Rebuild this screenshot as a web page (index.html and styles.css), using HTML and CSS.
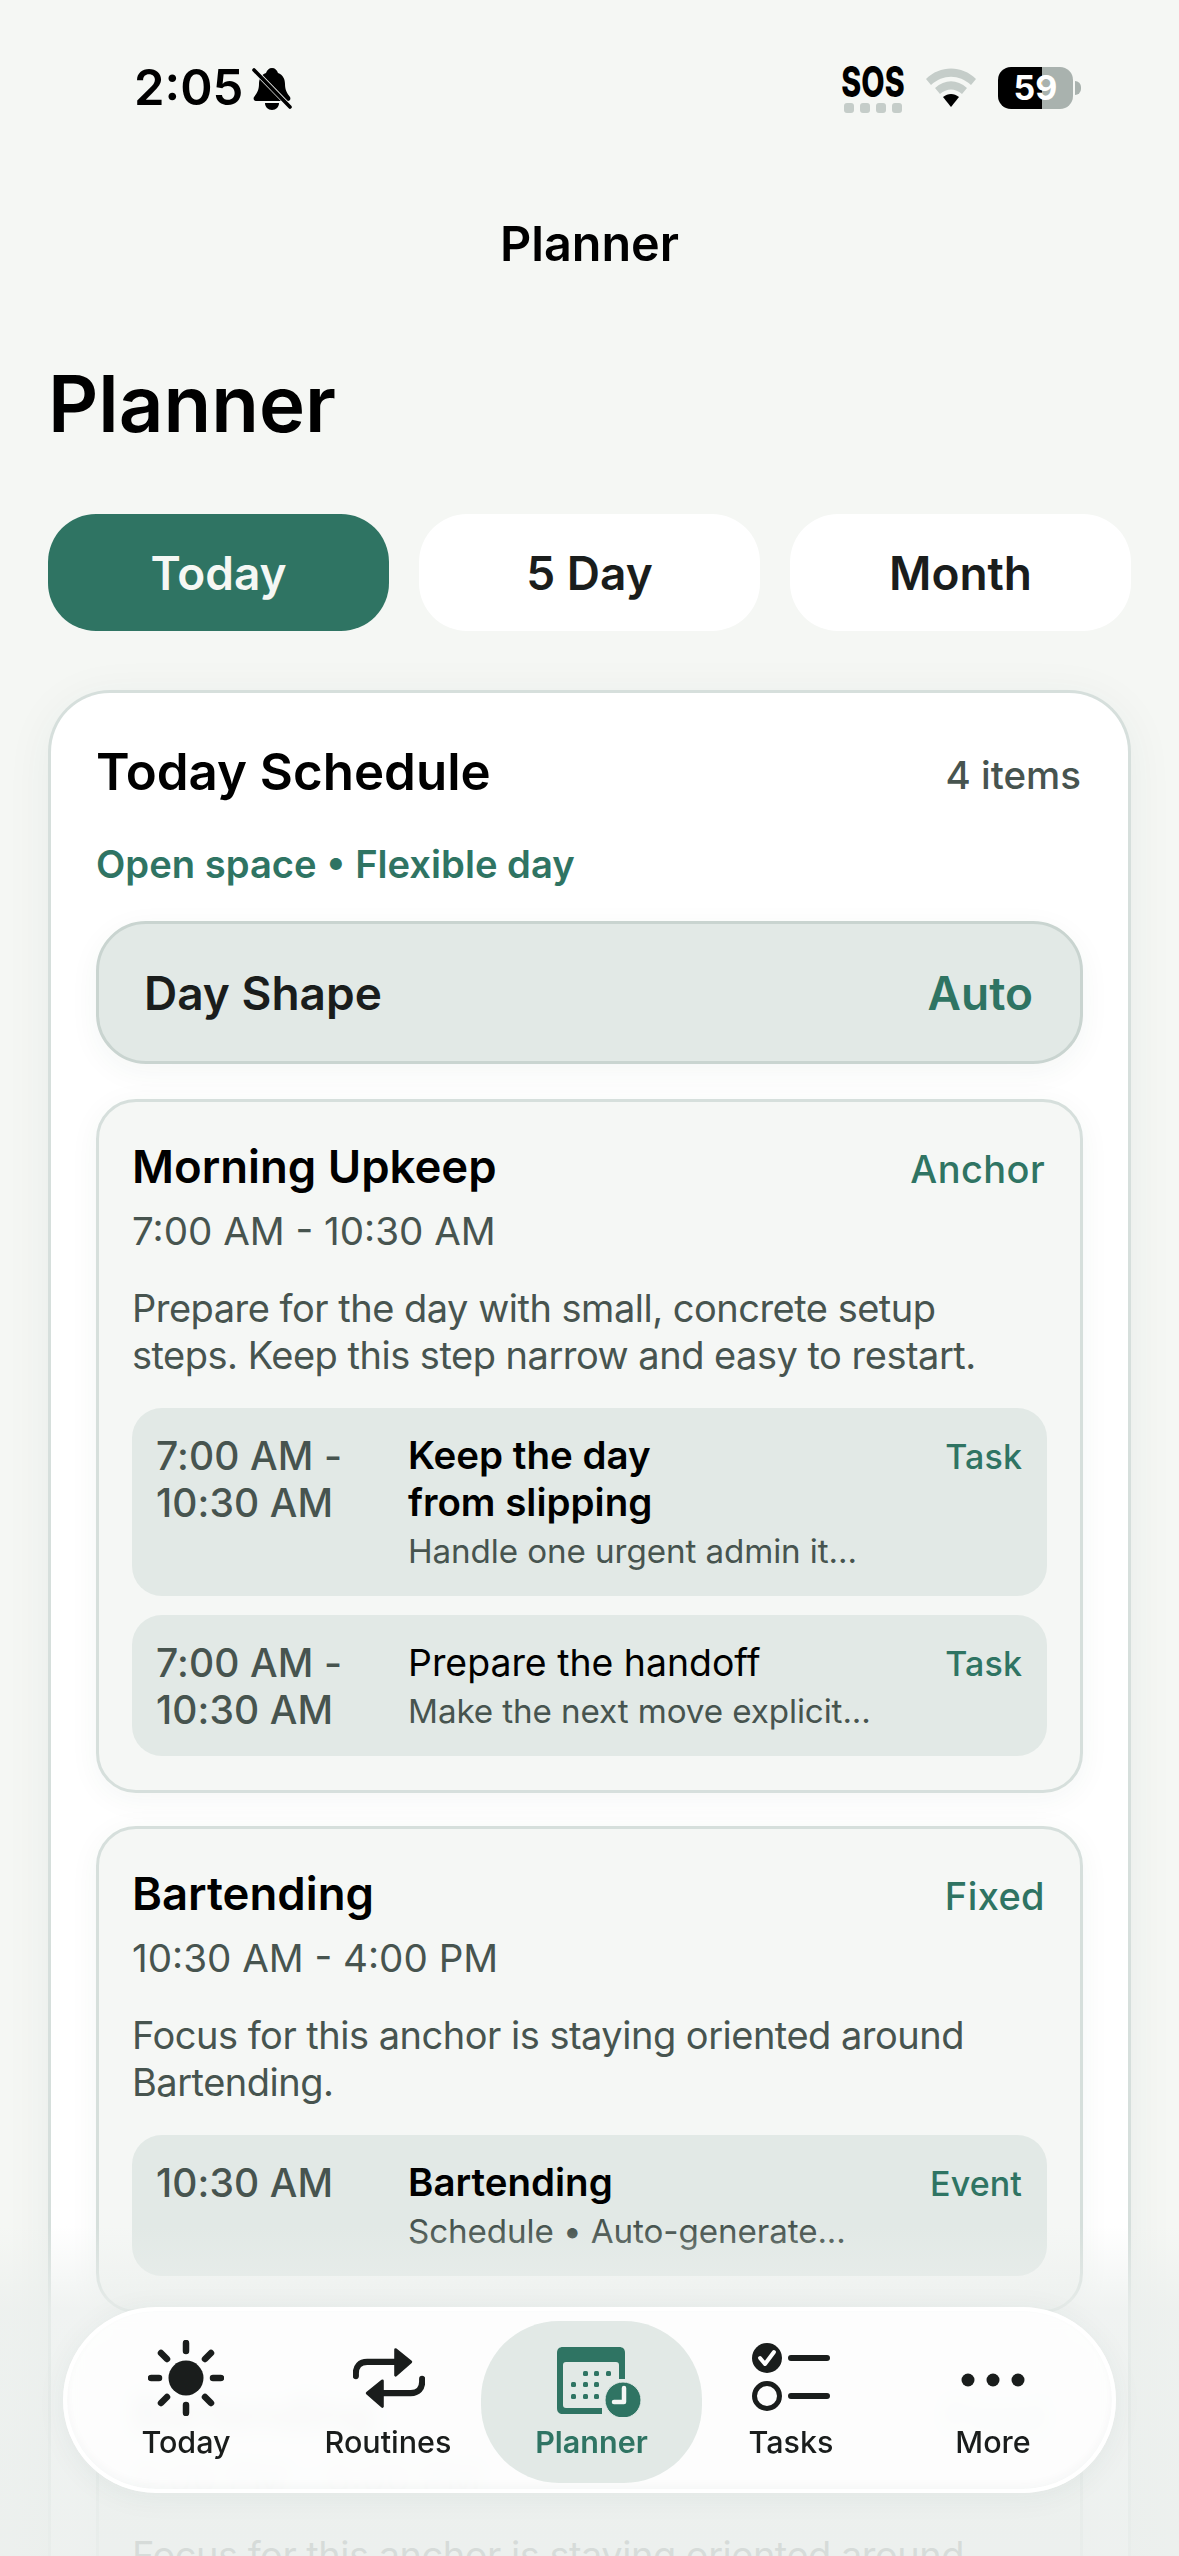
FILE: index.html
```html
<!DOCTYPE html>
<html lang="en">
<head>
<meta charset="utf-8">
<title>Planner</title>
<link rel="stylesheet" href="styles.css">
</head>
<body>
<div class="screen">
  <header class="status">
    <div class="status-left">
      <span class="clock">2:05</span>
      <svg class="bell" viewBox="0 0 40 43"><path d="M20 1c3 0 5 2 6 5 5 2 7 6 7 11 0 6 2 9 5 13 1 2 0 4-2 4H4c-2 0-3-2-2-4 3-4 5-7 5-13 0-5 2-9 7-11 1-3 3-5 6-5z" fill="#000"/><path d="M13 36h14c0 4-3 7-7 7s-7-3-7-7z" fill="#000"/><path d="M3 -1l39 40" stroke="#f5f7f4" stroke-width="5" transform="translate(-2.4 2.4)"/><path d="M2 3l36 37" stroke="#000" stroke-width="3.6" stroke-linecap="round"/></svg>
    </div>
    <div class="status-right">
      <div class="sos">
        <span class="sos-text">SOS</span>
        <span class="sos-dots"><i></i><i></i><i></i><i></i></span>
      </div>
      <svg class="wifi" viewBox="0 0 50 40"><path d="M0 11C14-3 36-3 50 11l-5 6C33 6 17 6 5 17z" fill="#c5cdc9"/><path d="M9 20c10-9 22-9 32 0l-5 6c-7-6-15-6-22 0z" fill="#c5cdc9"/><path d="M17 29c5-4 11-4 16 0l-8 10z" fill="#000"/></svg>
      <div class="battery"><span class="battery-num">59</span></div>
      <span class="battery-tip"></span>
    </div>
  </header>

  <div class="nav-title">Planner</div>
  <h1 class="page-title">Planner</h1>

  <div class="segments">
    <div class="segment segment-on">Today</div>
    <div class="segment">5 Day</div>
    <div class="segment">Month</div>
  </div>

  <section class="schedule">
    <div class="schedule-head">
      <h2>Today Schedule</h2>
      <span class="count">4 items</span>
    </div>
    <p class="mood">Open space • Flexible day</p>
    <div class="shape"><span>Day Shape</span><span class="shape-val">Auto</span></div>

    <article class="anchor">
      <div class="anchor-head"><h3>Morning Upkeep</h3><span class="tag">Anchor</span></div>
      <p class="anchor-time">7:00 AM - 10:30 AM</p>
      <p class="anchor-desc">Prepare for the day with small, concrete setup steps. Keep this step narrow and easy to restart.</p>
      <div class="item">
        <div class="item-time">7:00 AM - 10:30 AM</div>
        <div class="item-body"><div class="item-title strong">Keep the day<br>from slipping</div><div class="item-sub">Handle one urgent admin it...</div></div>
        <span class="item-tag">Task</span>
      </div>
      <div class="item">
        <div class="item-time">7:00 AM - 10:30 AM</div>
        <div class="item-body"><div class="item-title">Prepare the handoff</div><div class="item-sub">Make the next move explicit...</div></div>
        <span class="item-tag">Task</span>
      </div>
    </article>

    <article class="anchor">
      <div class="anchor-head"><h3>Bartending</h3><span class="tag">Fixed</span></div>
      <p class="anchor-time">10:30 AM - 4:00 PM</p>
      <p class="anchor-desc">Focus for this anchor is staying oriented around Bartending.</p>
      <div class="item">
        <div class="item-time">10:30 AM</div>
        <div class="item-body"><div class="item-title strong">Bartending</div><div class="item-sub">Schedule • Auto-generate...</div></div>
        <span class="item-tag">Event</span>
      </div>
    </article>

    <article class="anchor">
      <div class="anchor-head"><h3>Bartending</h3><span class="tag">Fixed</span></div>
      <p class="anchor-time">4:00 PM - 6:00 PM</p>
      <p class="anchor-desc">Focus for this anchor is staying oriented around Bartending.</p>
    </article>
  </section>

  <div class="fade"></div>

  <nav class="tabbar">
    <div class="tab">
      <svg class="ic ic-sun" viewBox="0 0 76 76" fill="none" stroke="#1a1d1c" stroke-width="6.5" stroke-linecap="round"><circle cx="38" cy="38" r="17.5" fill="#1a1d1c" stroke="none"/><path d="M38 3v8M38 65v8M3 38h8M65 38h8M13 13l6 6M57 57l6 6M13 63l6-6M57 19l6-6"/></svg>
      <span>Today</span>
    </div>
    <div class="tab">
      <svg class="ic ic-loop" viewBox="0 0 76 64" fill="none" stroke="#1a1d1c" stroke-width="6.5" stroke-linecap="round" stroke-linejoin="round"><path d="M3 30v-3c0-7 4-12 12-12h34"/><path d="M73 33v3c0 7-4 12-12 12H27"/><path d="M45 2l16 13-16 14z" fill="#1a1d1c" stroke-width="3"/><path d="M31 35L15 48l16 14z" fill="#1a1d1c" stroke-width="3"/></svg>
      <span>Routines</span>
    </div>
    <div class="tab tab-on">
      <svg class="ic ic-cal" viewBox="0 0 84 70"><path d="M6 0h56c4 0 6 2 6 6v26h-6V18c0-2-1-3-3-3H9c-2 0-3 1-3 3v40c0 2 1 3 3 3h36v6H6c-4 0-6-2-6-6V6c0-4 2-6 6-6z" fill="#2f7463"/><g fill="#2f7463"><rect x="26" y="24" width="5" height="5" rx="1.5"/><rect x="37" y="24" width="5" height="5" rx="1.5"/><rect x="49" y="24" width="5" height="5" rx="1.5"/><rect x="14" y="35" width="5" height="5" rx="1.5"/><rect x="26" y="35" width="5" height="5" rx="1.5"/><rect x="37" y="35" width="5" height="5" rx="1.5"/><rect x="14" y="47" width="5" height="5" rx="1.5"/><rect x="26" y="47" width="5" height="5" rx="1.5"/><rect x="37" y="47" width="5" height="5" rx="1.5"/></g><circle cx="66" cy="53" r="18" fill="#2f7463" stroke="#e2e9e6" stroke-width="1"/><path d="M67 41v14H57" fill="none" stroke="#f4f7f5" stroke-width="4.5" stroke-linecap="round" stroke-linejoin="round"/></svg>
      <span>Planner</span>
    </div>
    <div class="tab">
      <svg class="ic ic-tasks" viewBox="0 0 78 68" fill="none"><circle cx="15" cy="15" r="15" fill="#1a1d1c"/><path d="M8 15l5 6 9-12" stroke="#fff" stroke-width="4" stroke-linecap="round" stroke-linejoin="round"/><circle cx="15" cy="53" r="12.5" stroke="#1a1d1c" stroke-width="5"/><path d="M39 15h36M39 53h36" stroke="#1a1d1c" stroke-width="6" stroke-linecap="round"/></svg>
      <span>Tasks</span>
    </div>
    <div class="tab">
      <svg class="ic ic-more" viewBox="0 0 64 14" fill="#1a1d1c"><circle cx="7" cy="7" r="6.5"/><circle cx="32" cy="7" r="6.5"/><circle cx="57" cy="7" r="6.5"/></svg>
      <span>More</span>
    </div>
  </nav>
</div>
</body>
</html>
```
FILE: styles.css
```css
* { box-sizing: border-box; }
html, body { margin: 0; padding: 0; }
body {
  width: 1179px;
  height: 2556px;
  overflow: hidden;
  background: #f5f7f4;
  font-family: Inter, "Noto Sans", sans-serif;
  color: #000;
}
h1, h2, h3, p { margin: 0; font-weight: inherit; }

.screen { position: relative; width: 1179px; height: 2556px; overflow: hidden; }

/* status bar */
.status { height: 176px; padding: 64px 98px 0 134px; display: flex; justify-content: space-between; align-items: flex-start; }
.status-left { display: flex; align-items: center; gap: 9px; }
.clock { font-size: 49px; font-weight: 600; line-height: 48px; }
.bell { width: 40px; height: 43px; margin-top: 1px; }
.status-right { display: flex; align-items: flex-start; }
.sos { width: 62px; margin-right: 22px; display: flex; flex-direction: column; align-items: center; }
.sos-text { font-size: 42px; font-weight: 800; line-height: 36px; transform: scaleX(.72); white-space: nowrap; }
.sos-dots { display: flex; gap: 6px; margin-top: 3px; }
.sos-dots i { width: 10px; height: 10px; border-radius: 3px; background: #c5cdc9; }
.wifi { width: 50px; height: 40px; margin: 4px 22px 0 0; }
.battery {
  width: 75px; height: 42px; border-radius: 13px; margin-top: 3px;
  background: linear-gradient(90deg, #000 0 44px, #a9b2ae 44px 100%);
  display: flex; align-items: center; justify-content: center;
}
.battery-num { color: #fff; font-size: 34px; font-weight: 700; line-height: 42px; }
.battery-tip { width: 6px; height: 14px; margin: 17px 0 0 2px; background: #a9b2ae; border-radius: 0 6px 6px 0; }

/* titles */
.nav-title { text-align: center; font-size: 48.5px; font-weight: 600; line-height: 56px; margin-top: 40px; }
.page-title { font-size: 78px; font-weight: 600; line-height: 96px; padding-left: 48px; margin-top: 84px; }

/* segmented */
.segments { display: flex; gap: 30px; padding: 0 48px; margin-top: 62px; }
.segment {
  flex: 1; height: 117px; border-radius: 48px; background: #fff;
  display: flex; align-items: center; justify-content: center;
  font-size: 46px; font-weight: 600; color: #1a1d1c;
}
.segment-on { background: #2f7463; color: #f5f7f4; }

/* schedule card */
.schedule {
  margin: 59px 48px 0; padding: 49px 45px 0;
  background: #fff; border: 3px solid #d6dfdc; border-bottom: 0;
  border-radius: 62px 62px 0 0;
  box-shadow: 0 8px 48px rgba(40, 70, 60, .06);
  height: 1900px;
}
.schedule-head { display: flex; justify-content: space-between; align-items: center; height: 60px; }
.schedule-head h2 { font-size: 51px; font-weight: 600; line-height: 60px; }
.count { font-size: 38.5px; font-weight: 500; color: #47544f; padding: 5px 2px 0 0; }
.mood { margin-top: 38px; font-size: 38.2px; font-weight: 600; line-height: 48px; color: #2f7463; }
.shape {
  margin-top: 33px; height: 143px; padding: 0 47px 0 45px; border-radius: 50px;
  background: #e2e9e6; border: 3px solid #c9d4d0;
  display: flex; justify-content: space-between; align-items: center;
  font-size: 46px; font-weight: 600; color: #1a1d1c;
  box-shadow: 0 8px 30px rgba(40, 70, 60, .05);
}
.shape-val { color: #2f7463; }

.anchor {
  margin-top: 35px; padding: 35px 33px 34px;
  background: #f5f7f5; border: 3px solid #d6dfdc; border-radius: 40px;
  box-shadow: 0 6px 30px rgba(40, 70, 60, .05);
}
.anchor + .anchor { margin-top: 33px; }
.anchor-head { display: flex; justify-content: space-between; align-items: center; height: 60px; }
.anchor-head h3 { font-size: 45.5px; font-weight: 600; line-height: 60px; }
.tag { font-size: 38px; font-weight: 500; color: #2f7463; letter-spacing: .4px; padding: 3px 2px 0 0; }
.anchor-time { margin-top: 10px; font-size: 38.6px; line-height: 48px; color: #47544f; }
.anchor-desc { margin-top: 30px; font-size: 38px; line-height: 47px; color: #47544f; letter-spacing: -.5px; }

.item {
  margin-top: 19px; padding: 24px 25px 21px 24px;
  background: #e2e9e6; border-radius: 30px;
  display: flex; align-items: flex-start;
}
.anchor-desc + .item { margin-top: 29px; }
.item-time { width: 252px; flex: none; font-size: 39px; font-weight: 500; line-height: 47px; color: #47544f; padding-right: 40px; letter-spacing: .1px; }
.item-body { flex: 1; }
.item-title { font-size: 37.4px; font-weight: 400; line-height: 47px; color: #000; }
.item-title.strong { font-size: 38.5px; font-weight: 600; }
.item-sub { margin-top: 2px; font-size: 33.2px; line-height: 47px; color: #47544f; letter-spacing: -.1px; }
.item-tag { padding-top: 1px; font-size: 34px; font-weight: 500; line-height: 47px; color: #2f7463; letter-spacing: .1px; }

/* overlays */
.fade {
  position: absolute; left: 0; right: 0; bottom: 0; height: 330px;
  background: linear-gradient(180deg, rgba(235, 239, 237, 0) 0, rgba(235, 239, 237, .75) 25%, rgba(235, 239, 237, .88) 100%);
}
.tabbar {
  position: absolute; left: 63px; top: 2307px; width: 1053px; height: 186px;
  padding: 10px 21px; display: flex; justify-content: center;
  background: rgba(255, 255, 255, .86); border: 4px solid #fff; border-radius: 93px;
  backdrop-filter: blur(9px);
  box-shadow: 0 4px 30px rgba(40, 70, 60, .06), inset 0 -4px 8px rgba(40, 70, 60, .03);
}
.tab {
  position: relative; width: 202px; height: 162px; flex: none;
  display: flex; flex-direction: column; align-items: center; justify-content: flex-end;
  padding-bottom: 21px;
}
.tab span { font-size: 30.5px; font-weight: 500; line-height: 40px; color: #1a1d1c; }
.tab-on { width: 221px; margin: 0 -12px 0 -8px; background: #e2e9e6; border-radius: 78px; }
.tab-on span { color: #2f7463; font-weight: 600; }
.ic { position: absolute; }
.ic-sun { width: 76px; height: 76px; top: 19px; }
.ic-loop { width: 72px; height: 62px; top: 26px; margin-left: 2px; }
.ic-cal { width: 84px; height: 70px; top: 26px; margin-left: 14px; }
.ic-tasks { width: 78px; height: 68px; top: 22px; }
.ic-more { width: 64px; height: 14px; top: 52px; }
```
